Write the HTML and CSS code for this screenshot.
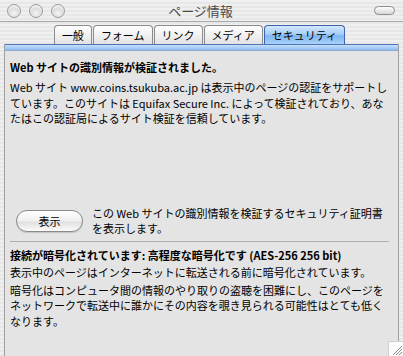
FILE: index.html
```html
<!DOCTYPE html>
<html lang="ja">
<head>
    <meta charset="UTF-8">
    <title>ページ情報</title>
    <link rel="stylesheet" href="styles.css">
</head>
<body>

<div class="window">
    <!-- Title bar -->
    <div class="titlebar">
        <div class="lights">
            <span class="light"></span>
            <span class="light"></span>
            <span class="light"></span>
        </div>
        <div class="title">ページ情報</div>
        <span class="toolbar-pill"></span>
    </div>

    <!-- Tabs -->
    <div class="tabs">
        <div class="tab">一般</div>
        <div class="tab">フォーム</div>
        <div class="tab">リンク</div>
        <div class="tab">メディア</div>
        <div class="tab active">セキュリティ</div>
    </div>

    <!-- Security panel -->
    <div class="panel">
        <div class="panel-bar"></div>
        <div class="panel-body">
            <h1 class="heading">Web サイトの識別情報が検証されました。</h1>
            <p class="text lead">Web サイト www.coins.tsukuba.ac.jp は表示中のページの認証をサポートしています。このサイトは Equifax Secure Inc. によって検証されており、あなたはこの認証局によるサイト検証を信頼しています。</p>

            <div class="cert-row">
                <button class="aqua-button">表示</button>
                <p class="text">この Web サイトの識別情報を検証するセキュリティ証明書を表示します。</p>
            </div>

            <div class="separator"></div>

            <h2 class="heading heading-second">接続が暗号化されています: 高程度な暗号化です (AES-256 256 bit)</h2>
            <p class="text">表示中のページはインターネットに転送される前に暗号化されています。</p>
            <p class="text">暗号化はコンピュータ間の情報のやり取りの盗聴を困難にし、このページをネットワークで転送中に誰かにその内容を覗き見られる可能性はとても低くなります。</p>
        </div>
    </div>

    <!-- Resize grip -->
    <svg class="grip" width="15" height="15" viewBox="0 0 15 15">
        <rect x="0" y="0" width="15" height="15" fill="#fbfbfb"/>
        <path d="M0.5 15 V0.5 H15" fill="none" stroke="#d0d0d0"/>
        <path d="M14 5 L5 14 M14 8 L8 14 M14 11 L11 14" stroke="#8a8a8a" stroke-width="1"/>
        <path d="M14 6 L6 14 M14 9 L9 14 M14 12 L12 14" stroke="#ffffff" stroke-width="1"/>
    </svg>
</div>

</body>
</html>
```

FILE: styles.css
```css
body {
    margin: 0;
    font-family: "Noto Sans CJK JP", sans-serif;
    font-size: 11px;
    color: #000;
}
.window {
    position: relative;
    width: 403px;
    height: 356px;
    overflow: hidden;
    background: repeating-linear-gradient(to bottom, #efefef 0, #efefef 2px, #e7e7e7 2px, #e7e7e7 4px);
}

/* title bar */
.titlebar {
    display: flex;
    align-items: center;
    height: 21px;
    padding: 0 7px;
    border-bottom: 1px solid #a8a8a8;
}
.lights {
    display: flex;
    gap: 8px;
}
.light {
    width: 12px;
    height: 12px;
    border-radius: 50%;
    border: 1px solid #9c9c9c;
    background: radial-gradient(circle at 50% 70%, #f4f4f4 0, #d8d8d8 55%, #bdbdbd 100%);
    box-shadow: inset 0 2px 2px rgba(255, 255, 255, 0.8);
}
.title {
    flex: 1;
    text-align: center;
    font-size: 13px;
    color: #4a4a4a;
    margin-left: -38px;
}
.toolbar-pill {
    width: 19px;
    height: 7px;
    margin-right: 1px;
    border-radius: 5px;
    border: 1px solid #8d8d8d;
    background: linear-gradient(to bottom, #fdfdfd, #d8d8d8);
}

/* tabs */
.tabs {
    display: flex;
    justify-content: center;
    gap: 1px;
    margin-top: 3px;
    padding-right: 4px;
}
.tab {
    height: 18px;
    line-height: 18px;
    padding: 0 7px;
    border: 1px solid #8b8b8b;
    border-bottom: none;
    border-radius: 4px 4px 0 0;
    background: linear-gradient(to bottom, #ffffff, #f1f1f1 50%, #e2e2e2);
}
.tab.active {
    border-color: #3d63ad;
    background: linear-gradient(to bottom, #d4e8fd, #a6cdf7 45%, #7fb5f1 55%, #a9d3fa);
}

/* panel */
.panel {
    margin: 0 4px;
    height: 320px;
    background: #e4e4e4;
    border-left: 1px solid #9e9e9e;
    border-right: 1px solid #9e9e9e;
}
.panel-bar {
    height: 5px;
    border-top: 1px solid #4f73b6;
    border-bottom: 1px solid #8fa9d4;
    background: linear-gradient(to bottom, #c7e0fb, #8fbdf1);
}
.panel-body {
    padding: 9px 5px 0 5px;
}
.heading {
    margin: 0;
    font-size: 11px;
    font-weight: bold;
    line-height: 15px;
}
.text {
    margin: 2px 0 0 0;
    line-height: 15.5px;
}
.text.lead {
    margin-top: 5px;
}
.cert-row {
    display: flex;
    align-items: flex-start;
    gap: 9px;
    margin-top: 79px;
}
.cert-row .text {
    margin: 0;
    line-height: 15px;
}
.aqua-button {
    flex: none;
    width: 67px;
    height: 22px;
    margin: 4.5px 0 0 6px;
    padding: 0;
    font-family: inherit;
    font-size: 11px;
    border: 1px solid #8a8a8a;
    border-radius: 11px;
    background: linear-gradient(to bottom, #ffffff, #f0f0f0 50%, #e0e0e0 55%, #fbfbfb);
    box-shadow: 0 1px 1px rgba(0, 0, 0, 0.15);
}
.separator {
    height: 1px;
    margin: 5.5px 4px 0 0;
    background: #aeaeae;
}
.heading-second {
    margin-top: 6px;
}

.grip {
    position: absolute;
    right: 0;
    bottom: 0;
}
```
